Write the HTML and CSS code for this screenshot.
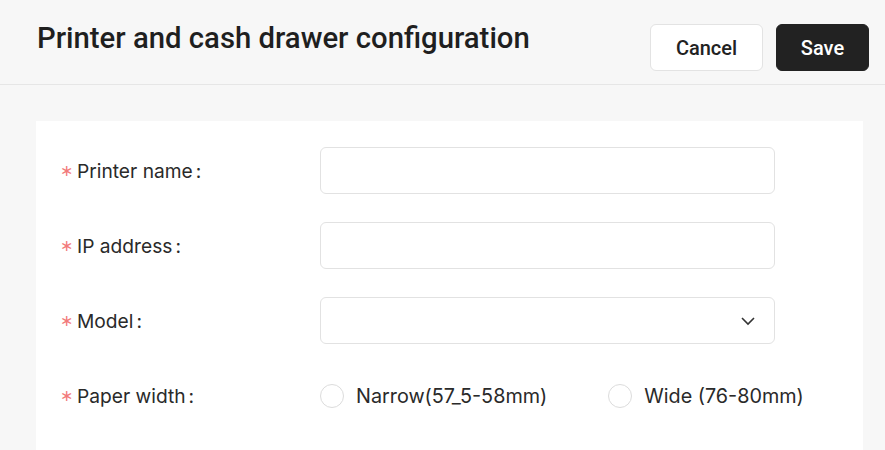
FILE: index.html
```html
<!DOCTYPE html>
<html>
<head>
<meta charset="utf-8">
<link rel="stylesheet" href="styles.css">
</head>
<body>
<div class="page">
  <header class="header">
    <h1 class="title">Printer and cash drawer configuration</h1>
    <div class="actions">
      <button class="btn btn-cancel">Cancel</button>
      <button class="btn btn-save">Save</button>
    </div>
  </header>
  <main class="content">
    <section class="card">
      <div class="row">
        <label class="label"><span class="req">∗</span>Printer name<span class="colon">:</span></label>
        <div class="input"></div>
      </div>
      <div class="row">
        <label class="label"><span class="req">∗</span>IP address<span class="colon">:</span></label>
        <div class="input"></div>
      </div>
      <div class="row">
        <label class="label"><span class="req">∗</span>Model<span class="colon">:</span></label>
        <div class="input select">
          <svg class="chev" width="16" height="10" viewBox="0 0 16 10"><path d="M2 2 L8 8 L14 2" fill="none" stroke="#333" stroke-width="1.6"/></svg>
        </div>
      </div>
      <div class="row radio-row">
        <label class="label"><span class="req">∗</span>Paper width<span class="colon">:</span></label>
        <div class="radios">
          <div class="radio"><span class="circle"></span><span class="rtext">Narrow(57_5-58mm)</span></div>
          <div class="radio"><span class="circle"></span><span class="rtext">Wide (76-80mm)</span></div>
        </div>
      </div>
    </section>
  </main>
</div>
</body>
</html>
```

FILE: styles.css
```css
* { box-sizing: border-box; }
html, body { margin: 0; padding: 0; }
body {
  background: #f7f7f7;
  font-family: Inter, "Noto Sans", sans-serif;
  color: #222;
  width: 885px;
  height: 450px;
  overflow: hidden;
}
.header {
  height: 85px;
  border-bottom: 1px solid #e6e6e6;
  display: flex;
  justify-content: space-between;
  align-items: flex-start;
  padding: 0 16px 0 37px;
}
.title {
  margin: 21px 0 0;
  font-family: Roboto, "Liberation Sans", sans-serif;
  font-weight: 500;
  font-size: 29.3px;
  color: #1f1f1f;
  letter-spacing: 0;
}
.actions {
  display: flex;
  gap: 13px;
  margin-top: 24px;
}
.btn {
  height: 47px;
  border-radius: 6px;
  font-family: Roboto, "Liberation Sans", sans-serif;
  font-size: 20px;
  font-weight: 500;
  cursor: pointer;
}
.btn-cancel {
  width: 113px;
  background: #fff;
  border: 1px solid #e3e3e3;
  color: #222;
}
.btn-save {
  width: 93px;
  background: #222;
  border: 1px solid #222;
  color: #fff;
}
.content {
  padding: 36px 22px 0 36px;
}
.card {
  background: #fff;
  padding: 26px 0 0 24px;
  height: 329px;
}
.row {
  display: flex;
  align-items: center;
  height: 47px;
  margin-bottom: 28px;
}
.label {
  width: 260px;
  font-size: 19.2px;
  display: flex;
  align-items: center;
  color: #2a2a2a;
}
.req {
  font-family: "DejaVu Sans", sans-serif;
  color: #f27b7b;
  font-size: 16px;
  width: 17px;
}
.colon { margin-left: 3px; }
.input {
  width: 455px;
  height: 47px;
  border: 1px solid #e2e2e2;
  border-radius: 6px;
  background: #fff;
  position: relative;
}
.select { display: flex; align-items: center; justify-content: flex-end; padding-right: 18px; }
.chev { display: block; }
.radio-row { margin-top: 2px; margin-bottom: 0; }
.radios { display: flex; gap: 61px; }
.radio { display: flex; align-items: center; gap: 12px; font-size: 19.8px; color: #2a2a2a; }
.circle {
  width: 24px; height: 24px;
  border: 1px solid #dcdcdc;
  border-radius: 50%;
  background: #fff;
}
```
